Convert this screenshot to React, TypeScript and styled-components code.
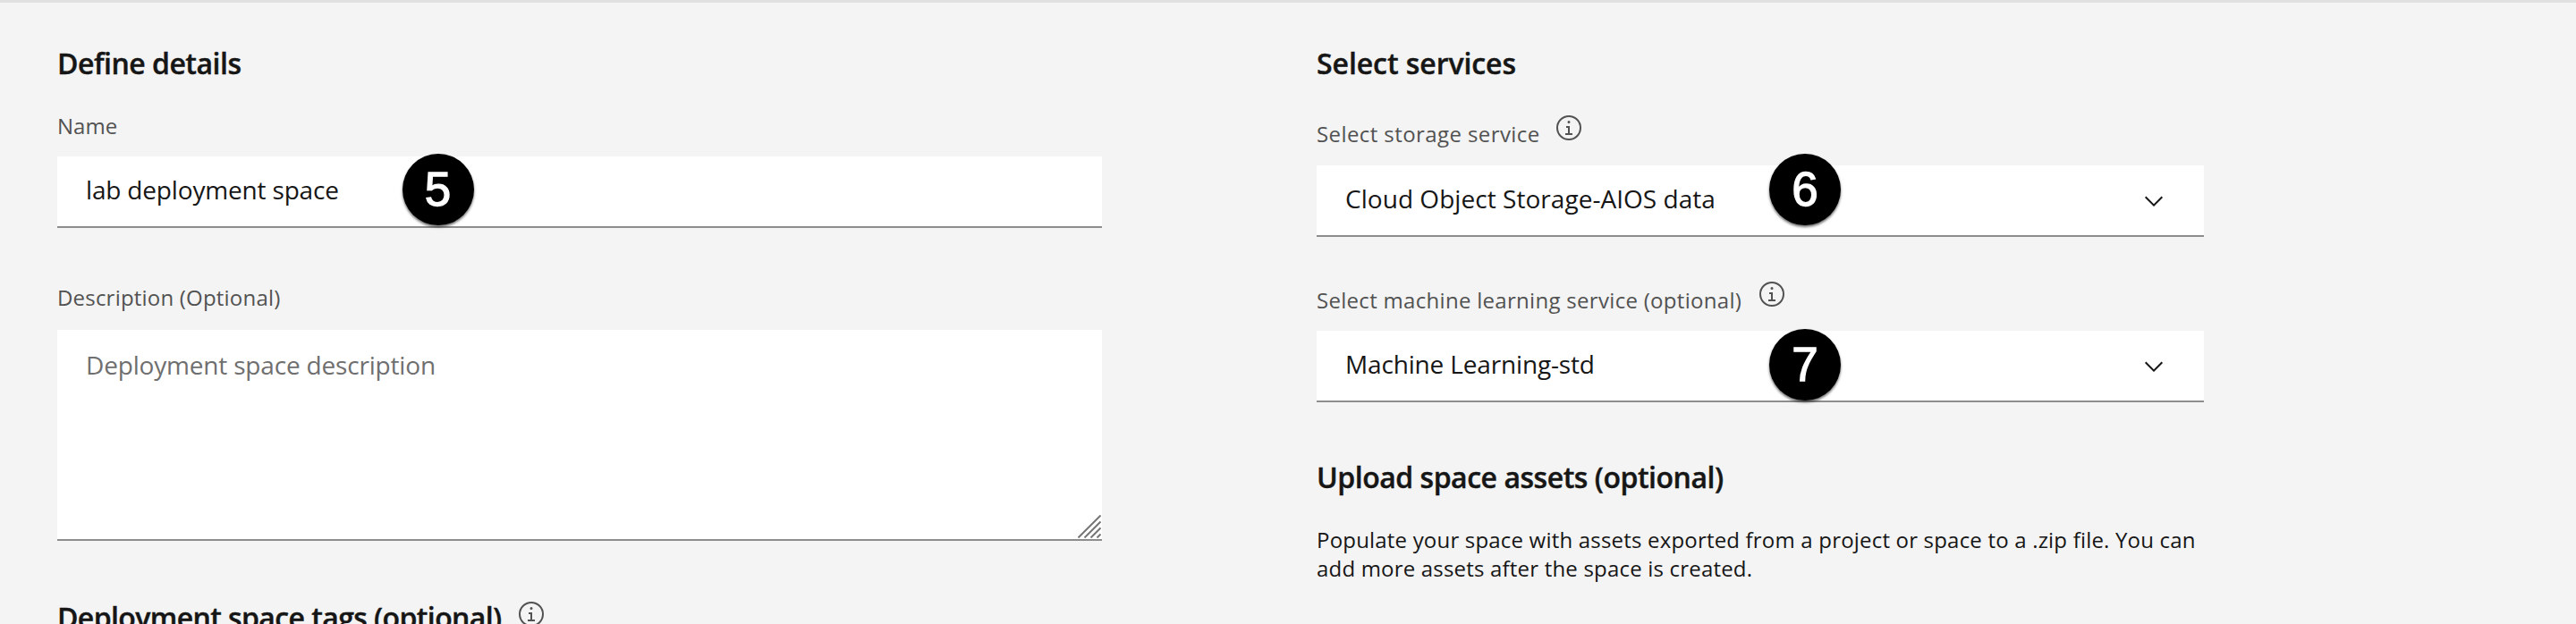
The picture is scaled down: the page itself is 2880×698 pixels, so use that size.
import React from "react";
import styled, { createGlobalStyle } from "styled-components";

const GlobalStyle = createGlobalStyle`
  * { box-sizing: border-box; }
  body {
    margin: 0;
    background: #f4f4f4;
    color: #161616;
    font-family: "Open Sans", "Noto Sans", sans-serif;
    overflow: hidden;
  }
`;

const Page = styled.main`
  display: grid;
  grid-template-columns: 1168px 992px;
  column-gap: 240px;
  align-items: start;
  height: 698px;
  padding: 48px 64px 0;
  border-top: 3px solid #e0e0e0;
  overflow: hidden;
`;

const Column = styled.section`
  display: flex;
  flex-direction: column;
`;

const HeadingRow = styled.div`
  display: flex;
  align-items: flex-start;
`;

const Heading = styled.h2<{ $tracking: number }>`
  margin: 0;
  font-size: 32px;
  font-weight: 600;
  line-height: 40px;
  letter-spacing: ${(p) => p.$tracking}px;
  white-space: nowrap;
  -webkit-text-stroke: 0.4px #161616;
`;

const Field = styled.div<{ $top: number; $gap: number }>`
  display: flex;
  flex-direction: column;
  margin-top: ${(p) => p.$top}px;
  gap: ${(p) => p.$gap}px;
`;

const Label = styled.label<{ $tracking: number }>`
  color: #525252;
  font-size: 24px;
  line-height: 32px;
  letter-spacing: ${(p) => p.$tracking}px;
  white-space: nowrap;
`;

const LabelRow = styled.div`
  display: flex;
  align-items: flex-start;
  height: 39px;

  ${Label} {
    margin-top: 7px;
  }
`;

const InfoSvg = styled.svg<{ $gap: number }>`
  flex: none;
  width: 32px;
  height: 32px;
  margin-left: ${(p) => p.$gap}px;
  fill: #525252;
`;

const Control = styled.div<{ $tracking: number }>`
  position: relative;
  display: flex;
  align-items: center;
  justify-content: space-between;
  height: 80px;
  padding: 0 40px 0 32px;
  background: #fff;
  border-bottom: 2px solid #8d8d8d;
  font-size: 28px;
  line-height: 36px;
  letter-spacing: ${(p) => p.$tracking}px;
  white-space: nowrap;
`;

const Value = styled.span`
  padding-bottom: 4px;
`;

const Chevron = styled.svg`
  width: 32px;
  height: 32px;
  margin-top: 2px;
  fill: #161616;
`;

const TextArea = styled.div`
  position: relative;
  height: 236px;
  padding: 21px 32px;
  background: #fff;
  border-bottom: 2px solid #8d8d8d;
  color: #6f6f6f;
  font-size: 28px;
  line-height: 36px;
  letter-spacing: -0.18px;
`;

const Resizer = styled.svg`
  position: absolute;
  right: 1px;
  bottom: 1px;
  width: 26px;
  height: 26px;
  fill: none;
  stroke: #767676;
  stroke-width: 2;
`;

const Badge = styled.span<{ $x: number; $y: number }>`
  position: absolute;
  left: ${(p) => p.$x}px;
  top: ${(p) => p.$y}px;
  display: flex;
  align-items: center;
  justify-content: center;
  width: 80px;
  height: 80px;
  padding-bottom: 1px;
  border-radius: 50%;
  background: #000;
  box-shadow: 0 2px 3px rgba(0, 0, 0, 0.6);
  color: #fff;
  font-family: "Liberation Sans", Arial, sans-serif;
  font-size: 53px;
  line-height: 80px;
  letter-spacing: 0;
  -webkit-text-stroke: 1.3px #fff;
`;

const TagsRow = styled(HeadingRow)`
  margin-top: 66px;
`;

const UploadSection = styled.div`
  display: flex;
  flex-direction: column;
  gap: 34px;
  margin-top: 64px;
`;

const Paragraph = styled.p`
  margin: 0;
  font-size: 24px;
  line-height: 32px;
  letter-spacing: 0.19px;
`;

const InfoIcon = ({ gap }: { gap: number }) => (
  <InfoSvg viewBox="0 0 32 32" $gap={gap} aria-hidden="true">
    <path d="M17 22V14H13v2h2v6H12v2h8V22zM16 8a1.5 1.5 0 1 0 1.5 1.5A1.5 1.5 0 0 0 16 8z" />
    <path d="M16 30A14 14 0 1 1 30 16 14 14 0 0 1 16 30zM16 4A12 12 0 1 0 28 16 12 12 0 0 0 16 4z" />
  </InfoSvg>
);

const ChevronDown = () => (
  <Chevron viewBox="0 0 16 16" aria-hidden="true">
    <path d="M8 11L3 6 3.7 5.3 8 9.6 12.3 5.3 13 6z" />
  </Chevron>
);

export default function App() {
  return (
    <>
      <GlobalStyle />
      <Page>
        <Column>
          <Heading $tracking={-0.5}>Define details</Heading>
          <Field $top={34} $gap={18}>
            <Label $tracking={0}>Name</Label>
            <Control $tracking={-0.17}>
              <Value>lab deployment space</Value>
              <Badge $x={385.5} $y={-3}>5</Badge>
            </Control>
          </Field>
          <Field $top={62} $gap={20}>
            <Label $tracking={0.2}>Description (Optional)</Label>
            <TextArea>
              Deployment space description
              <Resizer viewBox="0 0 26 26" aria-hidden="true">
                <path d="M.5 25.5L25.5.5M7.5 25.5L25.5 7.5M14.5 25.5L25.5 14.5M21.5 25.5L25.5 21.5" />
              </Resizer>
            </TextArea>
          </Field>
          <TagsRow>
            <Heading $tracking={-0.6}>Deployment space tags (optional)</Heading>
            <InfoIcon gap={17} />
          </TagsRow>
        </Column>

        <Column>
          <Heading $tracking={-0.07}>Select services</Heading>
          <Field $top={36} $gap={19}>
            <LabelRow>
              <Label $tracking={0.41}>Select storage service</Label>
              <InfoIcon gap={16} />
            </LabelRow>
            <Control $tracking={0.04}>
              <Value>Cloud Object Storage-AIOS data</Value>
              <ChevronDown />
              <Badge $x={506} $y={-13}>6</Badge>
            </Control>
          </Field>
          <Field $top={48} $gap={18}>
            <LabelRow>
              <Label $tracking={0.3}>Select machine learning service (optional)</Label>
              <InfoIcon gap={18} />
            </LabelRow>
            <Control $tracking={-0.16}>
              <Value>Machine Learning-std</Value>
              <ChevronDown />
              <Badge $x={506} $y={-2}>7</Badge>
            </Control>
          </Field>
          <UploadSection>
            <Heading $tracking={-0.48}>Upload space assets (optional)</Heading>
            <Paragraph>
              Populate your space with assets exported from a project or space to a .zip file. You can
              <br />
              add more assets after the space is created.
            </Paragraph>
          </UploadSection>
        </Column>
      </Page>
    </>
  );
}
